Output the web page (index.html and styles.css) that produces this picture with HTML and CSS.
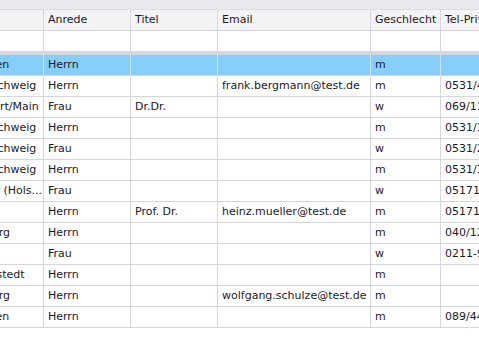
FILE: index.html
```html
<!DOCTYPE html>
<html lang="de">
<head>
<meta charset="utf-8">
<title>Kontakte</title>
<link rel="stylesheet" href="styles.css">
</head>
<body>
<div class="grid">
  <div class="group-strip"></div>
  <div class="viewport">
    <table class="data">
      <colgroup>
        <col class="c-city"><col class="c-anrede"><col class="c-titel"><col class="c-email"><col class="c-sex"><col class="c-tel">
      </colgroup>
      <thead>
        <tr class="head">
          <th>Ort</th><th>Anrede</th><th>Titel</th><th>Email</th><th>Geschlecht</th><th>Tel-Privat</th>
        </tr>
        <tr class="filter">
          <td></td><td></td><td></td><td></td><td></td><td></td>
        </tr>
      </thead>
      <tbody>
        <tr class="selected"><td>München</td><td>Herrn</td><td></td><td></td><td>m</td><td></td></tr>
        <tr><td>Braunschweig</td><td>Herrn</td><td></td><td>frank.bergmann@test.de</td><td>m</td><td>0531/445566</td></tr>
        <tr><td>Frankfurt/Main</td><td>Frau</td><td>Dr.Dr.</td><td></td><td>w</td><td>069/112233</td></tr>
        <tr><td>Braunschweig</td><td>Herrn</td><td></td><td></td><td>m</td><td>0531/123456</td></tr>
        <tr><td>Braunschweig</td><td>Frau</td><td></td><td></td><td>w</td><td>0531/234567</td></tr>
        <tr><td>Braunschweig</td><td>Herrn</td><td></td><td></td><td>m</td><td>0531/345678</td></tr>
        <tr><td class="ellip"><div class="fit">Neumünster (Hols...</div></td><td>Frau</td><td></td><td></td><td>w</td><td>05171/12345</td></tr>
        <tr><td></td><td>Herrn</td><td>Prof. Dr.</td><td>heinz.mueller@test.de</td><td>m</td><td>05171/54321</td></tr>
        <tr><td>Hamburg</td><td>Herrn</td><td></td><td></td><td>m</td><td>040/123456</td></tr>
        <tr><td></td><td>Frau</td><td></td><td></td><td>w</td><td>0211-987654</td></tr>
        <tr><td>Norderstedt</td><td>Herrn</td><td></td><td></td><td>m</td><td></td></tr>
        <tr><td>Hamburg</td><td>Herrn</td><td></td><td>wolfgang.schulze@test.de</td><td>m</td><td></td></tr>
        <tr><td>München</td><td>Herrn</td><td></td><td></td><td>m</td><td>089/445566</td></tr>
      </tbody>
    </table>
  </div>
</div>
</body>
</html>
```
FILE: styles.css
```css
* { box-sizing: border-box; }
html, body {
  margin: 0;
  padding: 0;
  background: #ffffff;
}
body {
  font-family: "DejaVu Sans", Verdana, sans-serif;
  font-size: 11px;
  color: #1a1a28;
  width: 479px;
  height: 353px;
  overflow: hidden;
}
.grid {
  width: 479px;
}
.group-strip {
  height: 10px;
  background: #e9e9ed;
  border-bottom: 1px solid #dcdce0;
}
.viewport {
  overflow: hidden;
  width: 479px;
}
.data {
  table-layout: fixed;
  border-collapse: separate;
  border-spacing: 0;
  margin-left: -45px;
  width: 631px;
}
.c-city { width: 89px; }
.c-anrede { width: 87px; }
.c-titel { width: 87px; }
.c-email { width: 153px; }
.c-sex { width: 70px; }
.c-tel { width: 145px; }

th, td {
  height: 21px;
  padding: 0 4px;
  border-right: 1px solid #d6d6da;
  border-bottom: 1px solid #d6d6da;
  white-space: nowrap;
  overflow: hidden;
  text-align: left;
  font-weight: normal;
  line-height: 20px;
  vertical-align: middle;
}
.head th {
  background: #f3f3f5;
  border-bottom-color: #d2d2d7;
}
.filter td {
  height: 24px;
  background: #ffffff;
  border-bottom: 4px solid #d7d7db;
}
.selected td {
  background: #87cefa;
  border-right-color: #c6e6f9;
  border-bottom-color: #d6d6da;
}
td.ellip {
  padding-right: 1px;
}
.fit {
  display: flex;
  justify-content: flex-end;
  white-space: nowrap;
}
```
